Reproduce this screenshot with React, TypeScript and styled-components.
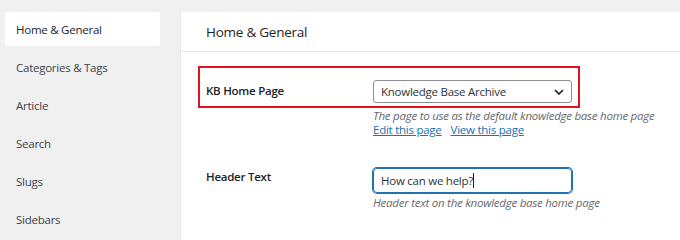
import React from "react";
import styled, { createGlobalStyle } from "styled-components";

const Global = createGlobalStyle`
  html, body { margin: 0; padding: 0; }
  body {
    background: #f0f0f1;
    font-family: "Open Sans", "Liberation Sans", sans-serif;
    letter-spacing: -0.25px;
    color: #1d2327;
    width: 680px;
    height: 240px;
    overflow: hidden;
  }
`;

const Layout = styled.div`
  display: flex;
  align-items: flex-start;
  height: 240px;
  padding-top: 12px;
  box-sizing: border-box;
`;

const Sidebar = styled.nav`
  width: 180px;
  display: flex;
  flex-direction: column;
  padding-left: 5px;
  padding-right: 20px;
  box-sizing: border-box;
`;

const NavItem = styled.div<{ $active?: boolean }>`
  display: flex;
  align-items: center;
  padding-left: 11px;
  font-size: 11.5px;
  color: ${(p) => (p.$active ? "#1d2327" : "#3c434a")};
  font-weight: ${(p) => (p.$active ? 500 : 400)};
  background: ${(p) => (p.$active ? "#ffffff" : "transparent")};
  height: ${(p) => (p.$active ? "34px" : "38px")};
  margin-bottom: ${(p) => (p.$active ? "2px" : "0")};
  border-radius: 2px;
`;

const Panel = styled.main`
  flex: 1;
  background: #ffffff;
  height: 228px;
  border-left: 1px solid #e8e8ea;
`;

const PanelHeader = styled.header`
  height: 40px;
  display: flex;
  align-items: center;
  padding-left: 25px;
  border-bottom: 1px solid #e6e6e8;
  box-sizing: border-box;
`;

const PanelTitle = styled.h2`
  margin: 0;
  font-size: 13.5px;
  font-weight: 500;
  color: #1d2327;
`;

const Content = styled.div`
  padding: 14px 0 0 17px;
  display: flex;
  flex-direction: column;
`;

const Highlight = styled.div`
  width: 382px;
  box-sizing: border-box;
  border: 2px solid #e3101f;
  padding: 12px 6px 3px 6px;
  display: grid;
  grid-template-columns: 167px 199px;
  align-items: start;
`;

const FieldRow = styled.div`
  display: grid;
  grid-template-columns: 167px 199px;
  align-items: start;
  padding-left: 8px;
  margin-top: 32px;
`;

const Label = styled.label<{ $offset?: number }>`
  font-size: 11.5px;
  font-weight: 600;
  color: #1d2327;
  padding-top: ${(p) => p.$offset ?? 0}px;
`;

const Select = styled.div`
  height: 23px;
  box-sizing: border-box;
  border: 1px solid #8c8f94;
  border-radius: 3px;
  display: flex;
  align-items: center;
  justify-content: space-between;
  padding: 0 7px 0 7px;
  font-size: 11.5px;
  color: #2c3338;
`;

const Help = styled.div`
  margin-left: 175px;
  display: flex;
  flex-direction: column;
  white-space: nowrap;
`;

const Description = styled.p`
  margin: 0;
  font-style: italic;
  color: #646970;
  font-size: 11.5px;
  line-height: 14px;
  margin-top: 1px;
  white-space: nowrap;
`;

const Links = styled.div`
  display: flex;
  gap: 9px;
  line-height: 13px;
  margin-top: 0px;
`;

const Link = styled.a`
  color: #2271b1;
  text-decoration: underline;
  font-size: 11.5px;
`;

const TextField = styled.div`
  height: 25px;
  box-sizing: border-box;
  border: 1px solid #2271b1;
  box-shadow: 0 0 0 1px #2271b1;
  border-radius: 4px;
  display: flex;
  align-items: center;
  padding: 0 7px;
  font-size: 11.5px;
  color: #2c3338;
`;

const Caret = styled.span`
  display: inline-block;
  width: 1px;
  height: 15px;
  background: #1d2327;
`;

const FieldHelp = styled.div`
  margin-left: 175px;
  margin-top: 2px;
`;

const Chevron = () => (
  <svg width="10" height="6" viewBox="0 0 10 6" aria-hidden="true">
    <path d="M1 1 L5 5 L9 1" fill="none" stroke="#1d2327" strokeWidth="1.7" />
  </svg>
);

const navItems = [
  "Home & General",
  "Categories & Tags",
  "Article",
  "Search",
  "Slugs",
  "Sidebars",
];

export default function App() {
  return (
    <>
      <Global />
      <Layout>
        <Sidebar>
          {navItems.map((item, i) => (
            <NavItem key={item} $active={i === 0}>
              {item}
            </NavItem>
          ))}
        </Sidebar>
        <Panel>
          <PanelHeader>
            <PanelTitle>Home &amp; General</PanelTitle>
          </PanelHeader>
          <Content>
            <Highlight>
              <Label $offset={3}>KB Home Page</Label>
              <Select>
                <span>Knowledge Base Archive</span>
                <Chevron />
              </Select>
            </Highlight>
            <Help>
              <Description>The page to use as the default knowledge base home page</Description>
              <Links>
                <Link href="#">Edit this page</Link>
                <Link href="#">View this page</Link>
              </Links>
            </Help>
            <FieldRow>
              <Label $offset={1}>Header Text</Label>
              <TextField>
                How can we help?
                <Caret />
              </TextField>
            </FieldRow>
            <FieldHelp>
              <Description>Header text on the knowledge base home page</Description>
            </FieldHelp>
          </Content>
        </Panel>
      </Layout>
    </>
  );
}
